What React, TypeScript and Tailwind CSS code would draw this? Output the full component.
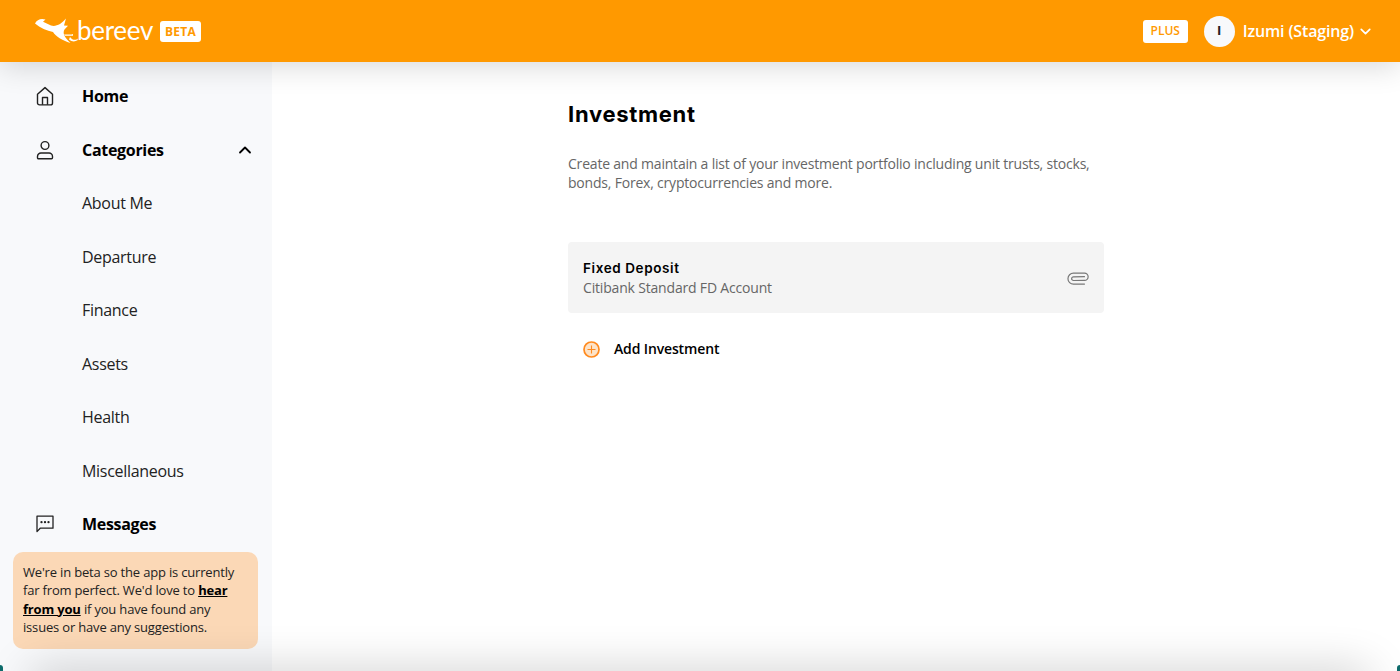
import { ChevronDown, ChevronUp, Paperclip } from "lucide-react";

const SUB_ITEMS = ["About Me", "Departure", "Finance", "Assets", "Health", "Miscellaneous"];

function HomeIcon() {
  return (
    <svg width="18" height="20" viewBox="0 0 18 20" fill="none" stroke="#222" strokeWidth="1.4" strokeLinejoin="round">
      <path d="M1.5 8.2 9 1.6l7.500 6.600v8.700a2 2 0 0 1-2 2h-11a2 2 0 0 1-2-2z" />
      <path d="M6.500 18.800v-7.300h5v7.300" />
    </svg>
  );
}

function UserIcon() {
  return (
    <svg width="18" height="20" viewBox="0 0 18 20" fill="none" stroke="#222" strokeWidth="1.4">
      <circle cx="9" cy="5.500" r="3.900" />
      <path d="M1.500 16.500a3.500 3.500 0 0 1 3.500-3.500h8a3.500 3.500 0 0 1 3.500 3.500v1.200a1 1 0 0 1-1 1h-13a1 1 0 0 1-1-1z" />
    </svg>
  );
}

function MessageIcon() {
  return (
    <svg width="18" height="18" viewBox="0 0 18 18" fill="none" stroke="#222" strokeWidth="1.3" strokeLinejoin="round">
      <path d="M1 1.200h16v12H4.200L1 16.600z" />
      <circle cx="5.500" cy="7.200" r="0.500" fill="#222" />
      <circle cx="9" cy="7.200" r="0.500" fill="#222" />
      <circle cx="12.500" cy="7.200" r="0.500" fill="#222" />
    </svg>
  );
}

function BirdLogo() {
  return (
    <svg width="44" height="28" viewBox="0 0 44 28" fill="#fff">
      <path d="M0 6.500C2 2.500 6 1 10.500 2.500L8 4.800 16 8.500C21 10 26.500 7 31 1.500L29 8.500 33 8.800 29.500 12.500C27.500 16 29 20 35.500 26 27 23.500 21 19.500 18 15 12 13.500 5 11 0 6.500z" />
      <path d="M29 17.500h7.500l1.500-.5v1.700h-8z" />
      <path d="M35 20c2.500 3.500 6 3.500 8 1.500l-.5 1.800c-2.500 1.700-6 1.500-8.500-.8z" />
    </svg>
  );
}

export default function App() {
  return (
    <div className="relative h-[671px] w-[1400px] overflow-hidden bg-white font-['Open_Sans',sans-serif] text-black">
      <header className="relative z-10 flex h-[62px] items-center justify-between bg-[#ff9900] pl-[35px] pr-[26.500px] shadow-[0_4px_30px_rgba(0,0,0,0.16)]">
        <div className="flex items-center">
          <BirdLogo />
          <span className="ml-[-2px] mt-[-3px] font-['Lato',sans-serif] text-[26px] leading-none font-normal tracking-[-0.3px] text-white">bereev</span>
          <span className="ml-[7px] mt-[1px] flex h-[21px] w-[41px] items-center justify-center rounded-[3px] bg-white text-[12px] font-bold tracking-[0.3px] text-[#ff9900]">BETA</span>
        </div>
        <div className="flex items-center">
          <span className="flex h-[23px] w-[45px] items-center justify-center rounded-[3px] bg-white text-[12px] font-semibold text-[#ff9900]">PLUS</span>
          <span className="ml-[16px] flex h-[31px] w-[31px] items-center justify-center rounded-full bg-[#f8f9fb] text-[13px] font-bold text-[#222]">I</span>
          <span className="ml-[8px] text-[16px] font-semibold tracking-[-0.15px] text-white">Izumi (Staging)</span>
          <ChevronDown className="ml-[2.500px] h-[17px] w-[17px] text-white" strokeWidth={2.4} />
        </div>
      </header>

      <div className="flex h-[609px]">
        <aside className="flex w-[272px] shrink-0 flex-col bg-[#f8f9fb] pt-[7.500px]">
          <nav className="flex flex-col tracking-[-0.3px]">
            <a className="flex h-[53.500px] items-center pl-[36px] text-[16px] font-bold">
              <HomeIcon />
              <span className="ml-[28px]">Home</span>
            </a>
            <a className="flex h-[53.500px] items-center pl-[36px] pr-[17px] text-[16px] font-bold">
              <UserIcon />
              <span className="ml-[28px] flex-1">Categories</span>
              <ChevronUp className="h-[20px] w-[20px]" strokeWidth={2.2} />
            </a>
            {SUB_ITEMS.map((item) => (
              <a key={item} className="flex h-[53.500px] items-center pl-[82px] text-[16px] text-[#222]">
                {item}
              </a>
            ))}
            <a className="flex h-[53.500px] items-center pl-[36px] text-[16px] font-bold">
              <MessageIcon />
              <span className="ml-[28px]">Messages</span>
            </a>
          </nav>
          <div className="ml-[13px] mt-[0.500px] h-[97px] w-[245px] rounded-[10px] bg-[#fbd8b6] px-[10px] py-[11px] text-[13px] leading-[18.500px] tracking-[-0.18px] text-[#222]">
            We're in beta so the app is currently far from perfect. We'd love to{" "}
            <a className="font-bold text-black underline">hear from you</a> if you have found any issues or have any suggestions.
          </div>
        </aside>

        <main className="flex-1 pl-[296px] pt-[37px]">
          <div className="w-[536px]">
            <h1 className="font-['Inter',sans-serif] text-[22px] leading-[30px] font-bold tracking-[0.7px]">Investment</h1>
            <p className="mt-[26px] text-[14px] leading-[18.500px] tracking-[-0.2px] text-[#666]">
              Create and maintain a list of your investment portfolio including unit trusts, stocks, bonds, Forex, cryptocurrencies and more.
            </p>
            <div className="mt-[50px] flex h-[71px] items-center justify-between rounded-[4px] bg-[#f4f4f4] pl-[15px] pr-[15px]">
              <div>
                <div className="font-['Inter',sans-serif] text-[13.500px] leading-[19px] font-semibold tracking-[0.6px]">Fixed Deposit</div>
                <div className="text-[14px] leading-[19px] tracking-[-0.18px] text-[#666]">Citibank Standard FD Account</div>
              </div>
              <Paperclip className="h-[22px] w-[22px] rotate-[45deg] text-[#777]" strokeWidth={1.3} />
            </div>
            <div className="mt-[26px] flex items-center pl-[15px]">
              <svg width="17" height="17" viewBox="0 0 17 17" fill="#fde3c8" stroke="#ff8a1e" strokeWidth="1.700">
                <circle cx="8.500" cy="8.500" r="7.500" />
                <path d="M8.500 4.500v8M4.500 8.500h8" strokeWidth="1.100" />
              </svg>
              <span className="ml-[14px] text-[14px] leading-[20px] font-semibold tracking-[-0.14px]">Add Investment</span>
            </div>
          </div>
        </main>
      </div>

      {/* bottom page shadow */}
      <div className="pointer-events-none absolute bottom-[-30px] left-[30px] right-[30px] h-[30px] rounded-[10px] shadow-[0_0_45px_rgba(0,0,0,0.22)]" />
      {/* window corners */}
      <div className="absolute bottom-0 left-0 h-[6px] w-[3px] rounded-tr-[3px] bg-[#0d6b6b]" />
      <div className="absolute bottom-0 right-0 h-[6px] w-[3px] rounded-tl-[3px] bg-[#0d6b6b]" />
    </div>
  );
}
